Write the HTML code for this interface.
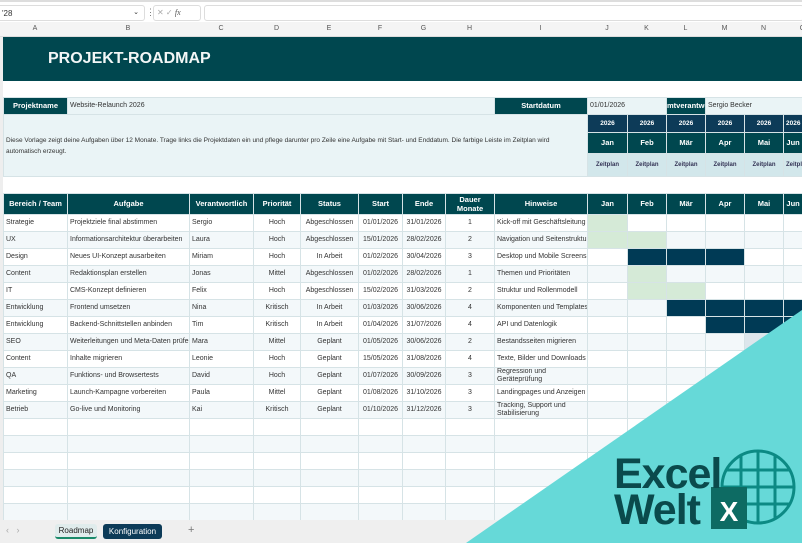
<!DOCTYPE html>
<html><head><meta charset="utf-8"><style>
*{margin:0;padding:0;box-sizing:border-box}
body{width:802px;height:543px;overflow:hidden;background:#fff;font-family:"Liberation Sans Narrow","Liberation Sans",sans-serif;position:relative;color:#333}
#fb{position:absolute;left:0;top:0;width:802px;height:22px;background:#fff;border-top:2px solid #ddd}
#ch{position:absolute;left:0;top:22px;width:802px;height:15px;background:#f4f4f4;border-bottom:1px solid #ddd}
#ch span{position:absolute;top:3px;font-size:7px;color:#555;text-align:center}
table{position:absolute;left:3px;top:37px;width:799px;border-collapse:collapse;table-layout:fixed;font-size:7px}
td{overflow:hidden;white-space:nowrap;border:1px solid #d6e3e6;padding:0 2px;height:17px;line-height:8px}
.dk{background:#00474f;color:#fff;font-weight:bold;text-align:center;font-size:7.5px}
.nv{background:#0d3b58;color:#fff;font-weight:bold;text-align:center;font-size:6.5px}
.lt{background:#eaf4f6}
.zp{background:#d2e7eb;text-align:center;font-size:6px;font-weight:bold;color:#335}
.c{text-align:center}
tr.a td{background:#fff}
tr.b td{background:#f3f8fa}
td.g{background:#d5ead7!important}
td.n{background:#003a55!important}
td.s{background:#dde6ec!important}
#tabs{position:absolute;left:0;top:520px;width:802px;height:23px;background:#efefef}
</style></head><body>
<div id="fb">
<div style="position:absolute;left:0;top:3px;width:145px;height:16px;border:1px solid #ddd;border-left:none;border-radius:0 3px 3px 0;font-size:8px;padding:3px 2px;color:#333">'28<span style="position:absolute;right:5px;top:2px;font-size:7px">⌄</span></div>
<div style="position:absolute;left:146px;top:5px;font-size:9px;color:#777">⋮</div>
<div style="position:absolute;left:153px;top:3px;width:48px;height:16px;border:1px solid #ddd;border-radius:3px;font-size:8px;color:#aaa;padding:2px 3px">✕ ✓ <i style="color:#555;font-family:'Liberation Serif'">fx</i></div>
<div style="position:absolute;left:204px;top:3px;width:600px;height:16px;border:1px solid #ddd;border-radius:3px"></div>
</div>
<div id="ch">
<span style="left:3px;width:64px">A</span><span style="left:67px;width:122px">B</span><span style="left:189px;width:64px">C</span><span style="left:253px;width:47px">D</span><span style="left:300px;width:58px">E</span><span style="left:358px;width:44px">F</span><span style="left:402px;width:43px">G</span><span style="left:445px;width:49px">H</span><span style="left:494px;width:93px">I</span><span style="left:587px;width:40px">J</span><span style="left:627px;width:39px">K</span><span style="left:666px;width:39px">L</span><span style="left:705px;width:39px">M</span><span style="left:744px;width:39px">N</span><span style="left:783px;width:39px">O</span>
</div>
<table>
<colgroup><col style="width:64px"><col style="width:122px"><col style="width:64px"><col style="width:47px"><col style="width:58px"><col style="width:44px"><col style="width:43px"><col style="width:49px"><col style="width:93px"><col style="width:40px"><col style="width:39px"><col style="width:39px"><col style="width:39px"><col style="width:39px"><col style="width:19px"></colgroup>
<tr><td colspan="15" style="height:43px;background:#00474f;color:#f2f6f6;font-family:'Liberation Sans',sans-serif;font-weight:bold;font-size:16px;padding-left:44px;border-color:#00474f">PROJEKT-ROADMAP</td></tr>
<tr><td colspan="15" style="border:none"></td></tr>
<tr><td class="dk">Projektname</td><td class="lt" colspan="7">Website-Relaunch 2026</td><td class="dk">Startdatum</td><td class="lt" colspan="2">01/01/2026</td><td class="dk" style="text-align:left;padding:0">mtverantwo</td><td class="lt" colspan="3">Sergio Becker</td></tr>
<tr><td colspan="9" rowspan="3" class="lt" style="white-space:normal;line-height:11px;font-size:6.5px;height:62px">Diese Vorlage zeigt deine Aufgaben über 12 Monate. Trage links die Projektdaten ein und pflege darunter pro Zeile eine Aufgabe mit Start- und Enddatum. Die farbige Leiste im Zeitplan wird automatisch erzeugt.</td><td class="nv" style="height:18px">2026</td><td class="nv">2026</td><td class="nv">2026</td><td class="nv">2026</td><td class="nv">2026</td><td class="nv">2026</td></tr>
<tr><td class="dk" style="height:21px">Jan</td><td class="dk">Feb</td><td class="dk">Mär</td><td class="dk">Apr</td><td class="dk">Mai</td><td class="dk">Jun</td></tr>
<tr><td class="zp" style="height:23px">Zeitplan</td><td class="zp">Zeitplan</td><td class="zp">Zeitplan</td><td class="zp">Zeitplan</td><td class="zp">Zeitplan</td><td class="zp">Zeitplan</td></tr>
<tr><td colspan="15" style="border:none"></td></tr>
<tr style="height:21px"><td class="dk">Bereich / Team</td><td class="dk">Aufgabe</td><td class="dk">Verantwortlich</td><td class="dk">Priorität</td><td class="dk">Status</td><td class="dk">Start</td><td class="dk">Ende</td><td class="dk" style="white-space:normal;line-height:9px">Dauer Monate</td><td class="dk">Hinweise</td><td class="dk">Jan</td><td class="dk">Feb</td><td class="dk">Mär</td><td class="dk">Apr</td><td class="dk">Mai</td><td class="dk">Jun</td></tr>
<tr class="a"><td>Strategie</td><td>Projektziele final abstimmen</td><td>Sergio</td><td class="c">Hoch</td><td class="c">Abgeschlossen</td><td class="c">01/01/2026</td><td class="c">31/01/2026</td><td class="c">1</td><td>Kick-off mit Geschäftsleitung</td><td class="g"></td><td></td><td></td><td></td><td></td><td></td></tr>
<tr class="b"><td>UX</td><td>Informationsarchitektur überarbeiten</td><td>Laura</td><td class="c">Hoch</td><td class="c">Abgeschlossen</td><td class="c">15/01/2026</td><td class="c">28/02/2026</td><td class="c">2</td><td>Navigation und Seitenstruktur</td><td class="g"></td><td class="g"></td><td></td><td></td><td></td><td></td></tr>
<tr class="a"><td>Design</td><td>Neues UI-Konzept ausarbeiten</td><td>Miriam</td><td class="c">Hoch</td><td class="c">In Arbeit</td><td class="c">01/02/2026</td><td class="c">30/04/2026</td><td class="c">3</td><td>Desktop und Mobile Screens</td><td></td><td class="n"></td><td class="n"></td><td class="n"></td><td></td><td></td></tr>
<tr class="b"><td>Content</td><td>Redaktionsplan erstellen</td><td>Jonas</td><td class="c">Mittel</td><td class="c">Abgeschlossen</td><td class="c">01/02/2026</td><td class="c">28/02/2026</td><td class="c">1</td><td>Themen und Prioritäten</td><td></td><td class="g"></td><td></td><td></td><td></td><td></td></tr>
<tr class="a"><td>IT</td><td>CMS-Konzept definieren</td><td>Felix</td><td class="c">Hoch</td><td class="c">Abgeschlossen</td><td class="c">15/02/2026</td><td class="c">31/03/2026</td><td class="c">2</td><td>Struktur und Rollenmodell</td><td></td><td class="g"></td><td class="g"></td><td></td><td></td><td></td></tr>
<tr class="b"><td>Entwicklung</td><td>Frontend umsetzen</td><td>Nina</td><td class="c">Kritisch</td><td class="c">In Arbeit</td><td class="c">01/03/2026</td><td class="c">30/06/2026</td><td class="c">4</td><td>Komponenten und Templates</td><td></td><td></td><td class="n"></td><td class="n"></td><td class="n"></td><td class="n"></td></tr>
<tr class="a"><td>Entwicklung</td><td>Backend-Schnittstellen anbinden</td><td>Tim</td><td class="c">Kritisch</td><td class="c">In Arbeit</td><td class="c">01/04/2026</td><td class="c">31/07/2026</td><td class="c">4</td><td>API und Datenlogik</td><td></td><td></td><td></td><td class="n"></td><td class="n"></td><td class="n"></td></tr>
<tr class="b"><td>SEO</td><td>Weiterleitungen und Meta-Daten prüfen</td><td>Mara</td><td class="c">Mittel</td><td class="c">Geplant</td><td class="c">01/05/2026</td><td class="c">30/06/2026</td><td class="c">2</td><td>Bestandsseiten migrieren</td><td></td><td></td><td></td><td></td><td class="s"></td><td class="s"></td></tr>
<tr class="a"><td>Content</td><td>Inhalte migrieren</td><td>Leonie</td><td class="c">Hoch</td><td class="c">Geplant</td><td class="c">15/05/2026</td><td class="c">31/08/2026</td><td class="c">4</td><td>Texte, Bilder und Downloads</td><td></td><td></td><td></td><td></td><td></td><td></td></tr>
<tr class="b"><td>QA</td><td>Funktions- und Browsertests</td><td>David</td><td class="c">Hoch</td><td class="c">Geplant</td><td class="c">01/07/2026</td><td class="c">30/09/2026</td><td class="c">3</td><td style="white-space:normal">Regression und Geräteprüfung</td><td></td><td></td><td></td><td></td><td></td><td></td></tr>
<tr class="a"><td>Marketing</td><td>Launch-Kampagne vorbereiten</td><td>Paula</td><td class="c">Mittel</td><td class="c">Geplant</td><td class="c">01/08/2026</td><td class="c">31/10/2026</td><td class="c">3</td><td>Landingpages und Anzeigen</td><td></td><td></td><td></td><td></td><td></td><td></td></tr>
<tr class="b"><td>Betrieb</td><td>Go-live und Monitoring</td><td>Kai</td><td class="c">Kritisch</td><td class="c">Geplant</td><td class="c">01/10/2026</td><td class="c">31/12/2026</td><td class="c">3</td><td style="white-space:normal">Tracking, Support und Stabilisierung</td><td></td><td></td><td></td><td></td><td></td><td></td></tr>
<tr class="a"><td></td><td></td><td></td><td></td><td></td><td></td><td></td><td></td><td></td><td></td><td></td><td></td><td></td><td></td><td></td></tr>
<tr class="b"><td></td><td></td><td></td><td></td><td></td><td></td><td></td><td></td><td></td><td></td><td></td><td></td><td></td><td></td><td></td></tr>
<tr class="a"><td></td><td></td><td></td><td></td><td></td><td></td><td></td><td></td><td></td><td></td><td></td><td></td><td></td><td></td><td></td></tr>
<tr class="b"><td></td><td></td><td></td><td></td><td></td><td></td><td></td><td></td><td></td><td></td><td></td><td></td><td></td><td></td><td></td></tr>
<tr class="a"><td></td><td></td><td></td><td></td><td></td><td></td><td></td><td></td><td></td><td></td><td></td><td></td><td></td><td></td><td></td></tr>
<tr class="b"><td></td><td></td><td></td><td></td><td></td><td></td><td></td><td></td><td></td><td></td><td></td><td></td><td></td><td></td><td></td></tr>
<tr class="a"><td></td><td></td><td></td><td></td><td></td><td></td><td></td><td></td><td></td><td></td><td></td><td></td><td></td><td></td><td></td></tr>
</table>
<div style="position:absolute;left:0;top:37px;width:3px;height:483px;background:#eee"></div>
<div id="tabs">
<span style="position:absolute;left:6px;top:5px;font-size:9px;color:#aaa">‹ &nbsp; ›</span>
<div style="position:absolute;left:55px;top:4px;width:42px;height:15px;background:#e0ecec;border-radius:3px;font-size:8px;text-align:center;line-height:13px;color:#222;border-bottom:2px solid #1a8a6a">Roadmap</div>
<div style="position:absolute;left:103px;top:4px;width:59px;height:15px;background:#0d3b58;border-radius:3px;font-size:8px;text-align:center;line-height:15px;color:#fff">Konfiguration</div>
<span style="position:absolute;left:188px;top:4px;font-size:11px;color:#777">+</span>
</div>
<svg style="position:absolute;left:0;top:0" width="802" height="543">
<polygon points="802,310 802,543 466,543" fill="#66d9d8"/>
<g fill="none" stroke="#0c8a84" stroke-width="3">
<circle cx="758" cy="487" r="36"/>
<line x1="722" y1="487" x2="794" y2="487"/><line x1="726" y1="470" x2="790" y2="470"/><line x1="726" y1="504" x2="790" y2="504"/>
<line x1="758" y1="451" x2="758" y2="523"/><line x1="741" y1="455" x2="741" y2="519"/><line x1="775" y1="455" x2="775" y2="519"/>
</g>
<rect x="711" y="487" width="36" height="42" fill="#0d6b63"/>
<text x="729" y="521" fill="#fff" font-family="Liberation Sans" font-weight="bold" font-size="28" text-anchor="middle">X</text>
<text x="614" y="488" fill="#0a4a4c" font-family="Liberation Sans" font-weight="bold" font-size="43" letter-spacing="-1">Excel</text>
<text x="614" y="524" fill="#0a4a4c" font-family="Liberation Sans" font-weight="bold" font-size="43" letter-spacing="-1">Welt</text>
</svg>
</body></html>
